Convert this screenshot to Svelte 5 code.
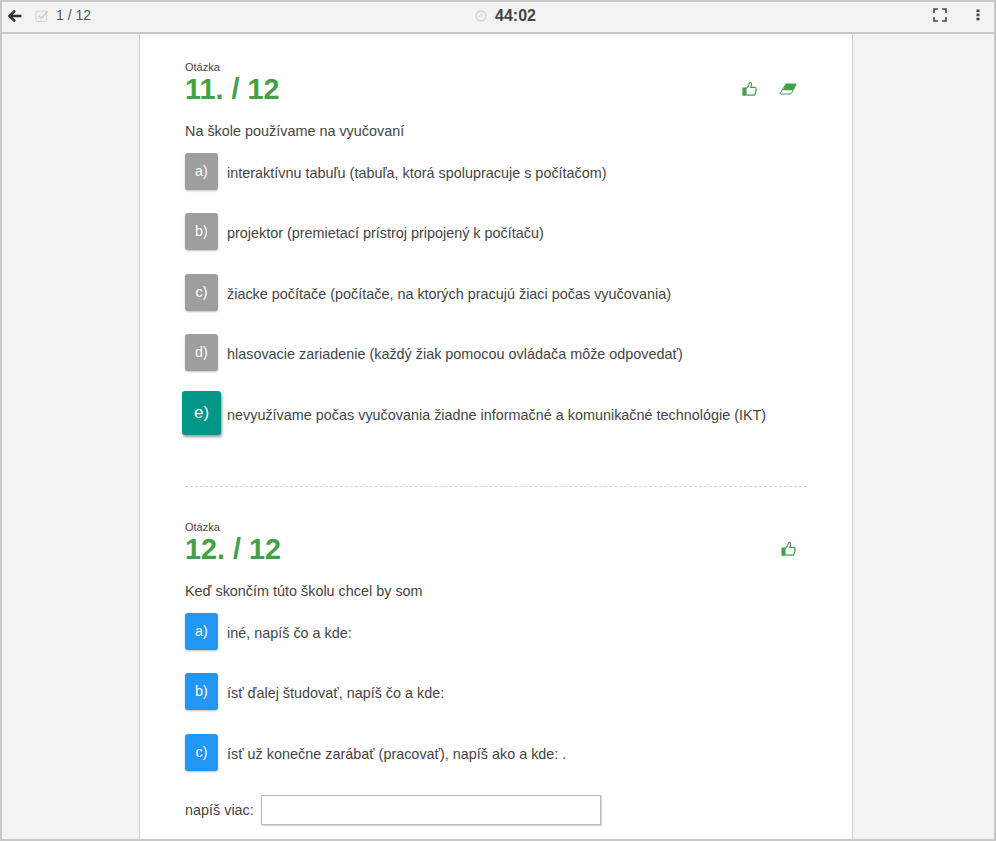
<script>
  const questions = [
    {
      number: '11. / 12',
      text: 'Na škole používame na vyučovaní',
      eraser: true,
      options: [
        { key: 'a)', label: 'interaktívnu tabuľu (tabuľa, ktorá spolupracuje s počítačom)' },
        { key: 'b)', label: 'projektor (premietací prístroj pripojený k počítaču)' },
        { key: 'c)', label: 'žiacke počítače (počítače, na ktorých pracujú žiaci počas vyučovania)' },
        { key: 'd)', label: 'hlasovacie zariadenie (každý žiak pomocou ovládača môže odpovedať)' },
        { key: 'e)', label: 'nevyužívame počas vyučovania žiadne informačné a komunikačné technológie (IKT)', selected: true }
      ]
    },
    {
      number: '12. / 12',
      text: 'Keď skončím túto školu chcel by som',
      eraser: false,
      blue: true,
      options: [
        { key: 'a)', label: 'iné, napíš čo a kde:' },
        { key: 'b)', label: 'ísť ďalej študovať, napíš čo a kde:' },
        { key: 'c)', label: 'ísť už konečne zarábať (pracovať), napíš ako a kde: .' }
      ]
    }
  ];
</script>

<div class="frame">
  <header class="toolbar">
    <div class="toolbar__left">
      <svg class="back" width="14" height="14" viewBox="0 0 14 14" aria-hidden="true">
        <path d="M7 1.600 1.600 7 7 12.400M2 7h11.400" fill="none" stroke="#333" stroke-width="2.600" />
      </svg>
      <svg class="check" width="14" height="14" viewBox="0 0 14 14" aria-hidden="true">
        <rect x="1" y="2" width="10.500" height="10.500" rx="1.500" fill="none" stroke="#d4d4d4" stroke-width="1.200" />
        <path d="M3.600 6.600 6.200 9.400 12.600 2.400" fill="none" stroke="#cfcfcf" stroke-width="1.600" />
      </svg>
      <span class="count">1 / 12</span>
    </div>
    <div class="toolbar__center">
      <svg width="12" height="12" viewBox="0 0 12 12" aria-hidden="true">
        <circle cx="6" cy="6" r="5" fill="none" stroke="#d0d0d0" stroke-width="1.300" />
        <path d="M6 3v3.300H3.600" fill="none" stroke="#d0d0d0" stroke-width="1" />
      </svg>
      <span class="time">44:02</span>
    </div>
    <div class="toolbar__right">
      <svg width="14" height="14" viewBox="0 0 14 14" aria-hidden="true">
        <path d="M1 5V1h4M9 1h4v4M13 9v4H9M5 13H1V9" fill="none" stroke="#444" stroke-width="1.600" />
      </svg>
      <svg width="4" height="12" viewBox="0 0 4 12" aria-hidden="true">
        <rect x="0.500" y="0.500" width="3" height="2.600" fill="#444" />
        <rect x="0.500" y="4.600" width="3" height="2.600" fill="#444" />
        <rect x="0.500" y="8.700" width="3" height="2.600" fill="#444" />
      </svg>
    </div>
  </header>

  <main class="page">
    <div class="sheet">
      {#each questions as q, i}
        <section class="question" class:question--last={i === questions.length - 1}>
          <div class="question__head">
            <div>
              <div class="question__over">Otázka</div>
              <h2 class="question__number">{q.number}</h2>
            </div>
            <div class="question__tools">
              <svg width="16" height="16" viewBox="0 0 16 16" aria-hidden="true">
                <path d="M1 7.200h3v7H1zM4 7.600c1.600-.9 2.900-3 3.400-5.400.2-1.100 2.200-1 2.200.8 0 1.200-.4 2.200-.8 3.400h3.900c1.500 0 1.700 1.300 1.100 2.100.6.7.5 1.700-.2 2.200.3.8 0 1.500-.6 1.800.1 1.100-.5 1.700-1.600 1.700H7c-1.200 0-2-.5-3-.8z" fill="none" stroke="#43a047" stroke-width="1.200" />
                <path d="M1 7.200h3v7H1z" fill="#43a047" />
              </svg>
              {#if q.eraser}
                <svg width="18" height="12" viewBox="0 0 18 12" aria-hidden="true">
                  <path d="M7 1h9.500q1 0 .5 1l-4.500 8q-.5 1-1.500 1H2q-1.200 0-.7-1z" fill="none" stroke="#43a047" stroke-width="1" />
                  <path d="M7 1h9.500q1 0 .5 1l-3 5.200H3.800z" fill="#43a047" />
                </svg>
              {/if}
            </div>
          </div>
          <p class="question__text">{q.text}</p>
          <ul class="options">
            {#each q.options as o}
              <li class="option">
                <span class="option__slot">
                  <span class="key" class:key--blue={q.blue} class:key--selected={o.selected}>{o.key}</span>
                </span>
                <span class="option__label">{o.label}</span>
              </li>
            {/each}
          </ul>
          {#if q.blue}
            <div class="more">
              <label for="more">napíš viac:</label>
              <input id="more" type="text" />
            </div>
          {/if}
        </section>
      {/each}
    </div>
  </main>
</div>

<style>
  :global(body) {
    margin: 0;
  }

  .frame {
    width: 996px;
    height: 841px;
    box-sizing: border-box;
    border: 2px solid #c8c8c8;
    background: #f3f3f3;
    overflow: hidden;
    display: flex;
    flex-direction: column;
    font-family: "Liberation Sans", Arial, sans-serif;
    color: #444;
  }

  .toolbar {
    flex: none;
    height: 32px;
    box-sizing: border-box;
    display: flex;
    align-items: center;
    justify-content: space-between;
    position: relative;
    background: #f3f3f3;
    border-bottom: 2px solid #c8c8c8;
    padding: 0 14px 3px 6px;
  }

  .toolbar__left {
    display: flex;
    align-items: center;
  }

  .back {
    margin-right: 13px;
  }

  .check {
    margin-right: 7px;
  }

  .count {
    font-size: 14px;
    color: #555;
    margin-top: -2px;
  }

  .toolbar__center {
    position: absolute;
    left: 473px;
    top: 5px;
    display: flex;
    align-items: center;
    gap: 8px;
  }

  .time {
    font-size: 16px;
    font-weight: bold;
    color: #444;
  }

  .toolbar__right {
    display: flex;
    align-items: center;
    gap: 29px;
    margin-top: -1px;
  }

  .page {
    flex: 1;
    min-height: 0;
    padding-left: 137px;
  }

  .sheet {
    width: 714px;
    height: 100%;
    box-sizing: border-box;
    background: #fff;
    border-left: 1px solid #ccc;
    border-right: 1px solid #ccc;
    padding: 0 45px;
  }

  .question {
    height: 453px;
    box-sizing: border-box;
    padding-top: 27px;
    border-bottom: 1px dashed #d6d6d6;
  }

  .question--last {
    border-bottom: 0;
    padding-top: 34px;
  }

  .question__head {
    display: flex;
    justify-content: space-between;
    align-items: flex-end;
  }

  .question__over {
    font-size: 11px;
    line-height: 13px;
    color: #444;
  }

  .question__number {
    margin: 0;
    font-size: 28.800px;
    line-height: 31px;
    font-weight: bold;
    color: #43a047;
  }

  .question__tools {
    display: flex;
    align-items: center;
    justify-content: flex-end;
    gap: 21px;
    padding: 0 10px 8px 0;
  }

  .question__text {
    margin: 16px 0 0;
    font-size: 14.400px;
    line-height: 20px;
  }

  .options {
    list-style: none;
    margin: 0;
    padding: 0;
  }

  .option {
    display: flex;
    align-items: center;
    height: 60.500px;
    font-size: 14.400px;
  }

  .option__slot {
    width: 42px;
    flex: none;
  }

  .option__label {
    padding-top: 3px;
  }

  .key {
    display: flex;
    align-items: center;
    justify-content: center;
    box-sizing: border-box;
    width: 33px;
    height: 37px;
    padding-bottom: 1px;
    border-radius: 3px;
    background: #9e9e9e;
    color: #fff;
    font-size: 14.400px;
    box-shadow: 0 1px 2px rgba(0, 0, 0, 0.25);
  }

  .key--blue {
    background: #2196f3;
  }

  .key--selected {
    width: 39px;
    height: 44px;
    margin-left: -3px;
    background: #009688;
    font-size: 17px;
    box-shadow: 1px 2px 3px rgba(0, 0, 0, 0.4);
  }

  .more {
    margin-top: 12px;
    display: flex;
    align-items: center;
    gap: 7px;
    font-size: 14.400px;
  }

  .more input {
    width: 340px;
    height: 30px;
    box-sizing: border-box;
    margin: 0;
    padding: 0 4px;
    background: #fff;
    border: 1px solid #bbb;
    box-shadow: 1px 1px 1px rgba(0, 0, 0, 0.15);
  }
</style>
